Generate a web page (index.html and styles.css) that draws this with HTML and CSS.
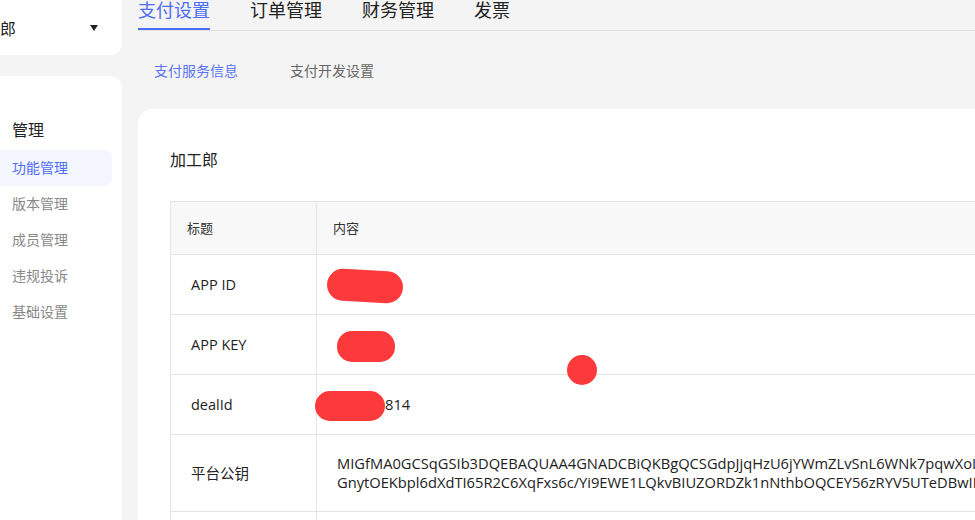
FILE: index.html
```html
<!DOCTYPE html>
<html lang="zh-CN">
<head>
  <meta charset="UTF-8">
  <meta name="viewport" content="width=device-width, initial-scale=1.0">
  <title>支付设置</title>
  <link rel="stylesheet" href="styles.css">
</head>
<body>
  <div class="page">
    <!-- 左侧菜单 -->
    <aside class="sidebar">
      <div class="app-card">
        <span class="app-name">加工郎</span>
        <span class="caret"></span>
      </div>
      <div class="menu-card">
        <div class="menu-title">管理</div>
        <div class="menu-item active">功能管理</div>
        <div class="menu-item">版本管理</div>
        <div class="menu-item">成员管理</div>
        <div class="menu-item">违规投诉</div>
        <div class="menu-item">基础设置</div>
      </div>
    </aside>

    <!-- 主体内容 -->
    <main class="main">
      <nav class="tabs">
        <div class="tab active">支付设置</div>
        <div class="tab">订单管理</div>
        <div class="tab">财务管理</div>
        <div class="tab">发票</div>
      </nav>

      <div class="sub-tabs">
        <div class="sub-tab active">支付服务信息</div>
        <div class="sub-tab">支付开发设置</div>
      </div>

      <section class="card">
        <h3 class="card-title">加工郎</h3>
        <table class="info-table">
          <thead>
            <tr>
              <th class="col-key">标题</th>
              <th>内容</th>
            </tr>
          </thead>
          <tbody>
            <tr>
              <td class="col-key">APP ID</td>
              <td><span class="mask mask-id"></span></td>
            </tr>
            <tr>
              <td class="col-key">APP KEY</td>
              <td><span class="mask mask-key"></span></td>
            </tr>
            <tr>
              <td class="col-key">dealId</td>
              <td class="latin"><span class="mask mask-deal"></span>814</td>
            </tr>
            <tr class="tall">
              <td class="col-key">平台公钥</td>
              <td class="latin">MIGfMA0GCSqGSIb3DQEBAQUAA4GNADCBiQKBgQCSGdpJjqHzU6jYWmZLvSnL6WNk7pqwXoI<br>GnytOEKbpl6dXdTI65R2C6XqFxs6c/Yi9EWE1LQkvBIUZORDZk1nNthbOQCEY56zRYV5UTeDBwIDAQAB</td>
            </tr>
            <tr>
              <td class="col-key"></td>
              <td></td>
            </tr>
          </tbody>
        </table>
        <span class="dot"></span>
      </section>
    </main>
  </div>
</body>
</html>
```

FILE: styles.css
```css
body {
  margin: 0;
  background-color: #f4f4f4;
  font-family: "Open Sans", "Noto Sans CJK SC", sans-serif;
  color: #333;
  overflow: hidden;
  height: 520px;
}

.page {
  display: flex;
  align-items: flex-start;
}

/* 左侧 */
.sidebar {
  width: 200px;
  margin-left: -78px;
  flex-shrink: 0;
}

.app-card {
  height: 55px;
  background-color: #fff;
  border-radius: 0 0 12px 12px;
  display: flex;
  align-items: center;
  justify-content: space-between;
  padding: 0 24px 0 46px;
}

.app-name {
  font-size: 16px;
  color: #222;
}

.caret {
  width: 0;
  height: 0;
  border-left: 4.5px solid transparent;
  border-right: 4.5px solid transparent;
  border-top: 6px solid #222;
}

.menu-card {
  margin-top: 21px;
  height: 460px;
  background-color: #fff;
  border-radius: 0 12px 0 0;
  padding-top: 36px;
}

.menu-title {
  height: 36px;
  line-height: 36px;
  padding-left: 90px;
  font-size: 16px;
  color: #222;
  margin-bottom: 2px;
}

.menu-item {
  height: 36px;
  line-height: 36px;
  margin: 0 10px 0 60px;
  padding-left: 30px;
  border-radius: 8px;
  font-size: 14px;
  color: #888;
}

.menu-item.active {
  background-color: #f4f6fe;
  color: #4f6ef2;
}

/* 主体 */
.main {
  width: 1000px;
  margin-left: 16px;
  flex-shrink: 0;
}

.tabs {
  display: flex;
  gap: 40px;
  height: 30px;
  border-bottom: 1px solid #e2e2e2;
}

.tab {
  font-size: 18px;
  line-height: 20px;
  padding-bottom: 8px;
  border-bottom: 2px solid transparent;
  color: #222;
}

.tab.active {
  color: #4f6ef2;
  border-bottom-color: #4f6ef2;
}

.sub-tabs {
  display: flex;
  gap: 20px;
  height: 78px;
  align-items: center;
}

.sub-tab {
  padding: 0 16px;
  font-size: 14px;
  color: #666;
}

.sub-tab.active {
  color: #5b74f2;
}

.card {
  position: relative;
  background-color: #fff;
  border-radius: 15px;
  padding: 40px 32px;
  height: 500px;
}

.card-title {
  margin: 0 0 30px;
  font-size: 16px;
  font-weight: normal;
  line-height: 22px;
  color: #222;
}

.info-table {
  width: 100%;
  border-collapse: collapse;
  font-size: 14px;
  color: #222;
}

.info-table th,
.info-table td {
  border: 1px solid #e4e4e4;
  text-align: left;
  line-height: 19px;
}

.info-table th {
  background-color: #f8f8f8;
  font-weight: normal;
  font-size: 13px;
  padding: 16.5px 16px;
  color: #333;
}

.info-table td {
  height: 19px;
  padding: 20px 20px;
  white-space: nowrap;
}

.info-table tr.tall td {
  padding-top: 19px;
  padding-bottom: 19px;
}

.info-table td.col-key {
  font-size: 14.5px;
}

.info-table td.latin {
  font-size: 14.7px;
}

.col-key {
  width: 105px;
}

/* 打码 */
.mask {
  display: inline-block;
  vertical-align: middle;
  background-color: #fc3a3c;
  border-radius: 16px;
}

.mask-id {
  width: 76px;
  height: 32px;
  margin: -10px 0 -10px -10px;
  transform: rotate(3deg);
}

.mask-key {
  width: 58px;
  height: 31px;
  margin: -10px 0;
  border-radius: 15px;
}

.mask-deal {
  width: 70px;
  height: 30px;
  margin: -10px 0 -10px -22px;
}

.dot {
  position: absolute;
  left: 429px;
  top: 246px;
  width: 30px;
  height: 30px;
  border-radius: 50%;
  background-color: #fc3a3c;
}
```
